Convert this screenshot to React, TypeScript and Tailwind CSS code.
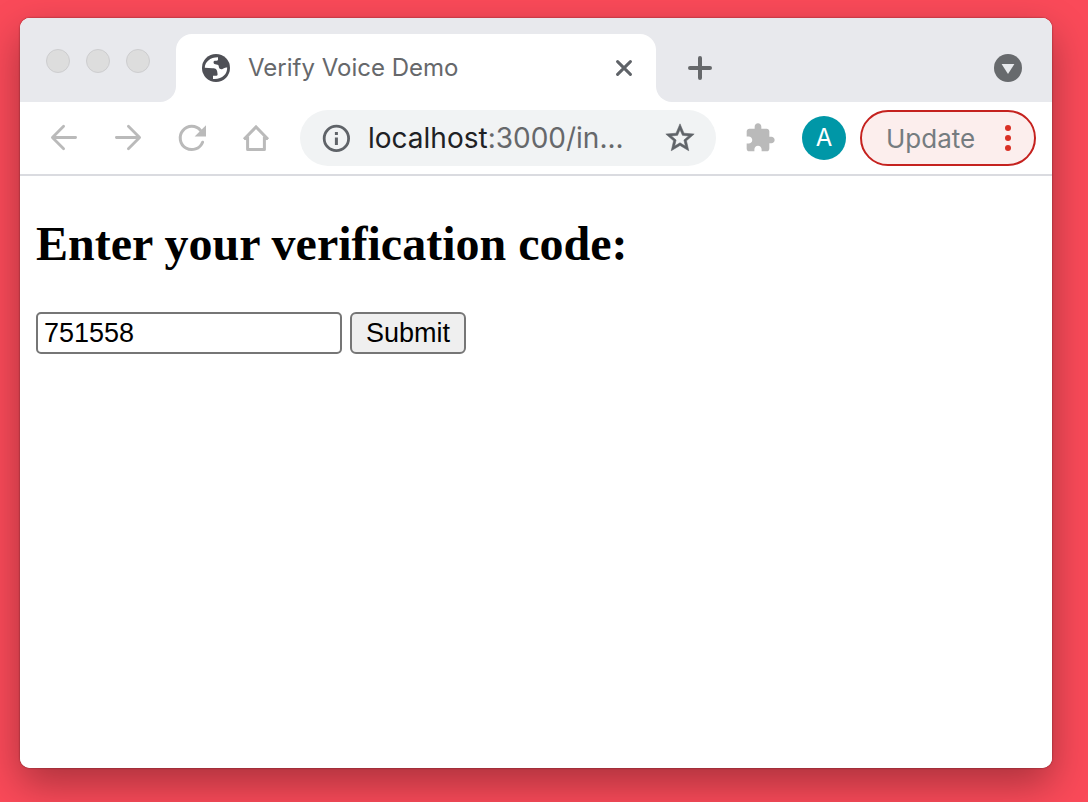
import React, { useState } from 'react';

const GlobeIcon = () => (
    <svg viewBox="0 0 28 28" className="w-7 h-7 shrink-0" aria-hidden="true">
        <circle cx="14" cy="14" r="14" fill="#4f5056" />
        <path
            d="M2.8 13.8C2.8 8 8 3.2 16 3.2V5.4C16 6.4 15 6.8 13.6 6.8C12 6.8 11.4 7.4 11.6 8.8C11.8 10 12.6 10.4 14.4 10.4C16 10.4 16.8 11.2 16.8 12.6C16.8 14.4 18 15.4 20 15.2C21.6 15 21.8 13.6 25.2 13.6C25.4 20.4 20 25.6 11 24.9V21.8H14.4C15.6 21.8 15.8 20.8 15.4 19C15.2 15.4 13.8 14.2 10.6 14.2Z"
            fill="#fff"
        />
    </svg>
);

const CloseIcon = () => (
    <svg viewBox="0 0 16 16" className="w-4 h-4" fill="none" stroke="#5f6368" strokeWidth="3" strokeLinecap="round">
        <path d="M1.6 1.6L14.4 14.4M14.4 1.6L1.6 14.4" />
    </svg>
);

const PlusIcon = () => (
    <svg viewBox="0 0 24 24" className="w-6 h-6" fill="none" stroke="#66686b" strokeWidth="4" strokeLinecap="round">
        <path d="M2 12H22M12 2V22" />
    </svg>
);

const TabSearchIcon = () => (
    <svg viewBox="0 0 28 28" className="w-7 h-7">
        <circle cx="14" cy="14" r="14" fill="#676a6d" />
        <path d="M7.6 10H20.4L14 20Z" fill="#e8eaed" />
    </svg>
);

const BackIcon = () => (
    <svg viewBox="0 0 32 32" className="w-8 h-8" fill="none" stroke="#bababa" strokeWidth="2.8" strokeLinecap="round" strokeLinejoin="round">
        <path d="M27.6 15.5H5M15.6 4.2L4.4 15.5L15.6 26.8" />
    </svg>
);

const ForwardIcon = () => (
    <svg viewBox="0 0 32 32" className="w-8 h-8" fill="none" stroke="#bababa" strokeWidth="2.8" strokeLinecap="round" strokeLinejoin="round">
        <path d="M4.4 15.5H27M16.4 4.2L27.6 15.5L16.4 26.8" />
    </svg>
);

const ReloadIcon = () => (
    <svg viewBox="0 0 32 32" className="w-8 h-8">
        <path
            d="M26.6 20.2A11.6 11.6 0 1 1 24.6 8.4"
            fill="none"
            stroke="#bababa"
            strokeWidth="3"
            strokeLinecap="round"
        />
        <path d="M30 3.2V14.4H18.6Z" fill="#bababa" />
    </svg>
);

const HomeIcon = () => (
    <svg viewBox="0 0 32 32" className="w-8 h-8" fill="none" stroke="#bababa" strokeWidth="3" strokeLinejoin="round">
        <path d="M4 17.2L16 5L28 17.2" strokeLinejoin="miter" />
        <path d="M7.6 14.4V27.6H24.4V14.4" />
        <path d="M4.4 16.4H8M24 16.4H27.6" />
    </svg>
);

const InfoIcon = () => (
    <svg viewBox="0 0 28 28" className="w-7 h-7" fill="none" stroke="#5f6368">
        <circle cx="14.4" cy="14.4" r="12.2" strokeWidth="2.8" />
        <path d="M14.4 13.4V21" strokeWidth="3" />
        <path d="M14.4 8V11" strokeWidth="3" />
    </svg>
);

const StarIcon = () => (
    <svg viewBox="0 0 24 24" className="w-[34px] h-[34px]" fill="#5f6368" stroke="#5f6368" strokeWidth="0.4">
        <path d="M22 9.24l-7.19-.62L12 2 9.19 8.63 2 9.24l5.46 4.73L5.82 21 12 17.27 18.18 21l-1.63-7.03L22 9.24zM12 15.4l-3.76 2.27 1-4.28-3.32-2.88 4.38-.38L12 6.1l1.71 4.04 4.38.38-3.32 2.88 1 4.28L12 15.4z" />
    </svg>
);

const ExtensionIcon = () => (
    <svg viewBox="0 0 24 24" className="w-8 h-8" fill="#bababa">
        <path d="M20.5 11H19V7c0-1.1-.9-2-2-2h-4V3.5C13 2.12 11.88 1 10.5 1S8 2.12 8 3.5V5H4c-1.1 0-1.99.9-1.99 2v3.8H3.5c1.49 0 2.7 1.21 2.7 2.7s-1.21 2.7-2.7 2.7H2V20c0 1.1.9 2 2 2h3.8v-1.5c0-1.49 1.21-2.7 2.7-2.7 1.49 0 2.7 1.21 2.7 2.7V22H17c1.1 0 2-.9 2-2v-4h1.5c1.38 0 2.5-1.12 2.5-2.5S21.88 11 20.5 11z" />
    </svg>
);

const MenuDots = () => (
    <svg viewBox="0 0 6 26" className="w-[6px] h-[26px]" fill="#d93025">
        <circle cx="3" cy="3" r="3" />
        <circle cx="3" cy="13" r="3" />
        <circle cx="3" cy="23" r="3" />
    </svg>
);

const TabStrip = () => (
    <div className="flex h-[84px] bg-white">
        <div className="w-[156px] shrink-0 flex gap-4 pl-[26px] pt-[31px] bg-[#e8e9ed] rounded-br-2xl">
            {['Close', 'Minimize', 'Zoom'].map((label) => (
                <button
                    key={label}
                    type="button"
                    aria-label={label}
                    className="w-6 h-6 rounded-full bg-[#dddddd] border border-[#cdcdcf]"
                />
            ))}
        </div>
        <div className="w-[480px] flex pt-4 bg-[#e8e9ed]">
            <div className="flex-1 min-w-0 flex items-center pl-[26px] pr-6 bg-white rounded-t-2xl">
                <GlobeIcon />
                <span className="flex-1 min-w-0 ml-[18px] text-2xl text-[#66686b] whitespace-nowrap">
                    Verify Voice Demo
                </span>
                <button type="button" aria-label="Close tab">
                    <CloseIcon />
                </button>
            </div>
        </div>
        <div className="flex-1 flex items-center justify-between pl-8 pr-[30px] pt-4 bg-[#e8e9ed] rounded-bl-2xl">
            <button type="button" aria-label="New tab">
                <PlusIcon />
            </button>
            <button type="button" aria-label="Search tabs">
                <TabSearchIcon />
            </button>
        </div>
    </div>
);

const Toolbar = () => (
    <div className="flex items-center h-[74px] pl-7 pr-4 border-b-2 border-[#dadbe0]">
        <div className="flex gap-8">
            <button type="button" aria-label="Back">
                <BackIcon />
            </button>
            <button type="button" aria-label="Forward">
                <ForwardIcon />
            </button>
            <button type="button" aria-label="Reload">
                <ReloadIcon />
            </button>
            <button type="button" aria-label="Home">
                <HomeIcon />
            </button>
        </div>
        <div className="flex-1 min-w-0 flex items-center h-14 ml-7 pl-[22px] pr-[19px] rounded-full bg-[#f1f3f4]">
            <button type="button" aria-label="View site information">
                <InfoIcon />
            </button>
            <div className="flex-1 min-w-0 ml-[18px] text-[28px] whitespace-nowrap text-[#66686b]">
                <span className="text-[#202124]">localhost</span>:3000/in...
            </div>
            <button type="button" aria-label="Bookmark this tab">
                <StarIcon />
            </button>
        </div>
        <button type="button" aria-label="Extensions" className="ml-7">
            <ExtensionIcon />
        </button>
        <button
            type="button"
            aria-label="Profile"
            className="w-11 h-11 ml-[26px] rounded-full bg-[#0097a7] text-2xl text-white"
        >
            A
        </button>
        <button
            type="button"
            className="flex items-center justify-between w-44 h-14 ml-[14px] pl-6 pr-[23px] rounded-full border-2 border-[#c5221f] bg-[#fceeed] text-[26px] text-[#757c80]"
        >
            Update
            <MenuDots />
        </button>
    </div>
);

const VerifyPage = () => {
    const [code, setCode] = useState('751558');

    return (
        <main className="flex-1 px-4 pt-10 bg-white text-black">
            <h2 className="font-['Liberation_Serif',serif] font-bold text-5xl leading-14 [font-feature-settings:'liga','dlig']">
                <label htmlFor="code">Enter your verification code:</label>
            </h2>
            <form
                onSubmit={(e) => e.preventDefault()}
                className="flex gap-2 mt-10 font-['Liberation_Sans',sans-serif] text-[27px] leading-8"
            >
                <input
                    id="code"
                    type="text"
                    value={code}
                    onChange={(e) => setCode(e.target.value)}
                    className="w-[306px] h-[42px] px-[6px] border-2 border-[#767676] rounded-[5px]"
                />
                <button
                    type="submit"
                    className="h-[42px] px-[14px] border-2 border-[#767676] rounded-md bg-[#efefef]"
                >
                    Submit
                </button>
            </form>
        </main>
    );
};

export default function App() {
    return (
        <div className="min-h-screen flex flex-col pt-[18px] pr-9 pb-[34px] pl-5 bg-[#fa4a59] font-['Inter',sans-serif]">
            <div className="flex-1 flex flex-col overflow-hidden rounded-[10px] bg-white shadow-[0_0_2px_rgba(0,0,0,0.5),0_16px_40px_rgba(0,0,0,0.32)]">
                <TabStrip />
                <Toolbar />
                <VerifyPage />
            </div>
        </div>
    );
}
